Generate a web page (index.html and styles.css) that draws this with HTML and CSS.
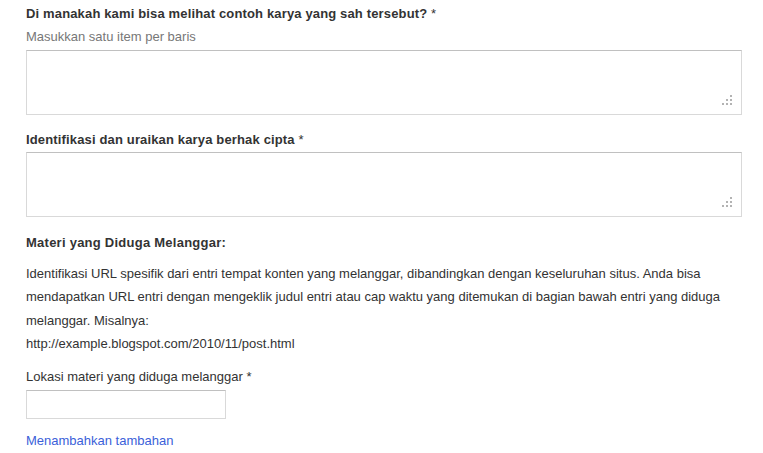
FILE: index.html
```html
<!DOCTYPE html>
<html lang="id">
<head>
<meta charset="utf-8">
<link rel="stylesheet" href="styles.css">
</head>
<body>
<div class="form">
  <div class="field">
    <label class="label">Di manakah kami bisa melihat contoh karya yang sah tersebut? <span class="req">*</span></label>
    <div class="hint">Masukkan satu item per baris</div>
    <div class="area-wrap">
      <textarea class="area"></textarea>
      <svg class="grip" width="10" height="10" viewBox="0 0 10 10" aria-hidden="true"><rect x="8" y="0" width="2" height="2"/><rect x="4" y="4" width="2" height="2"/><rect x="8" y="4" width="2" height="2"/><rect x="0" y="8" width="2" height="2"/><rect x="4" y="8" width="2" height="2"/><rect x="8" y="8" width="2" height="2"/></svg>
    </div>
  </div>
  <div class="field field2">
    <label class="label">Identifikasi dan uraikan karya berhak cipta <span class="req">*</span></label>
    <div class="area-wrap">
      <textarea class="area"></textarea>
      <svg class="grip" width="10" height="10" viewBox="0 0 10 10" aria-hidden="true"><rect x="8" y="0" width="2" height="2"/><rect x="4" y="4" width="2" height="2"/><rect x="8" y="4" width="2" height="2"/><rect x="0" y="8" width="2" height="2"/><rect x="4" y="8" width="2" height="2"/><rect x="8" y="8" width="2" height="2"/></svg>
    </div>
  </div>
  <div class="section">
    <h3 class="section-title">Materi yang Diduga Melanggar:</h3>
    <p class="desc">Identifikasi URL spesifik dari entri tempat konten yang melanggar, dibandingkan dengan keseluruhan situs. Anda bisa mendapatkan URL entri dengan mengeklik judul entri atau cap waktu yang ditemukan di bagian bawah entri yang diduga melanggar. Misalnya:<br>http://example.blogspot.com/2010/11/post.html</p>
  </div>
  <div class="field field3">
    <label class="plain-label">Lokasi materi yang diduga melanggar *</label>
    <input class="input" type="text">
  </div>
  <a class="add-link" href="#">Menambahkan tambahan</a>
</div>
</body>
</html>
```
FILE: styles.css
```css
html, body {
  margin: 0;
  padding: 0;
  background: #fff;
}
body {
  font-family: "Liberation Sans", Arial, sans-serif;
  font-size: 13px;
  color: #333;
}
.form {
  padding: 6px 22px 0 26px;
  display: flex;
  flex-direction: column;
}
.field {
  display: flex;
  flex-direction: column;
}
.label {
  font-weight: bold;
  line-height: 16px;
  color: #333;
  letter-spacing: 0.15px;
}
.req {
  font-weight: normal;
}
.hint {
  color: #777;
  line-height: 16px;
  margin-top: 7px;
}
.area-wrap {
  position: relative;
  width: 716px;
  margin-top: 5px;
}
.field2 .area-wrap {
  margin-top: 4px;
}
.area {
  box-sizing: border-box;
  display: block;
  width: 716px;
  height: 65px;
  margin: 0;
  padding: 4px;
  border: 1px solid #d9d9d9;
  border-top-color: #c0c0c0;
  border-radius: 0;
  resize: none;
  font: inherit;
  background: #fff;
}
.grip {
  position: absolute;
  right: 10px;
  bottom: 10px;
  fill: #b3b3b3;
}
.field2 {
  margin-top: 17px;
}
.section {
  margin-top: 18px;
}
.section-title {
  margin: 0;
  font-size: 13px;
  font-weight: bold;
  line-height: 16px;
  color: #333;
  letter-spacing: 0.25px;
}
.desc {
  margin: 11px 0 0 0;
  line-height: 23.3px;
  color: #333;
  width: 700px;
}
.field3 {
  margin-top: 14px;
}
.plain-label {
  line-height: 16px;
  color: #333;
}
.input {
  box-sizing: border-box;
  width: 200px;
  height: 29px;
  margin: 5px 0 0 0;
  padding: 4px;
  border: 1px solid #d9d9d9;
  border-top-color: #c0c0c0;
  border-radius: 0;
  font: inherit;
}
.add-link {
  margin-top: 14px;
  color: #3b5fd9;
  text-decoration: none;
  line-height: 16px;
  align-self: flex-start;
}
```
